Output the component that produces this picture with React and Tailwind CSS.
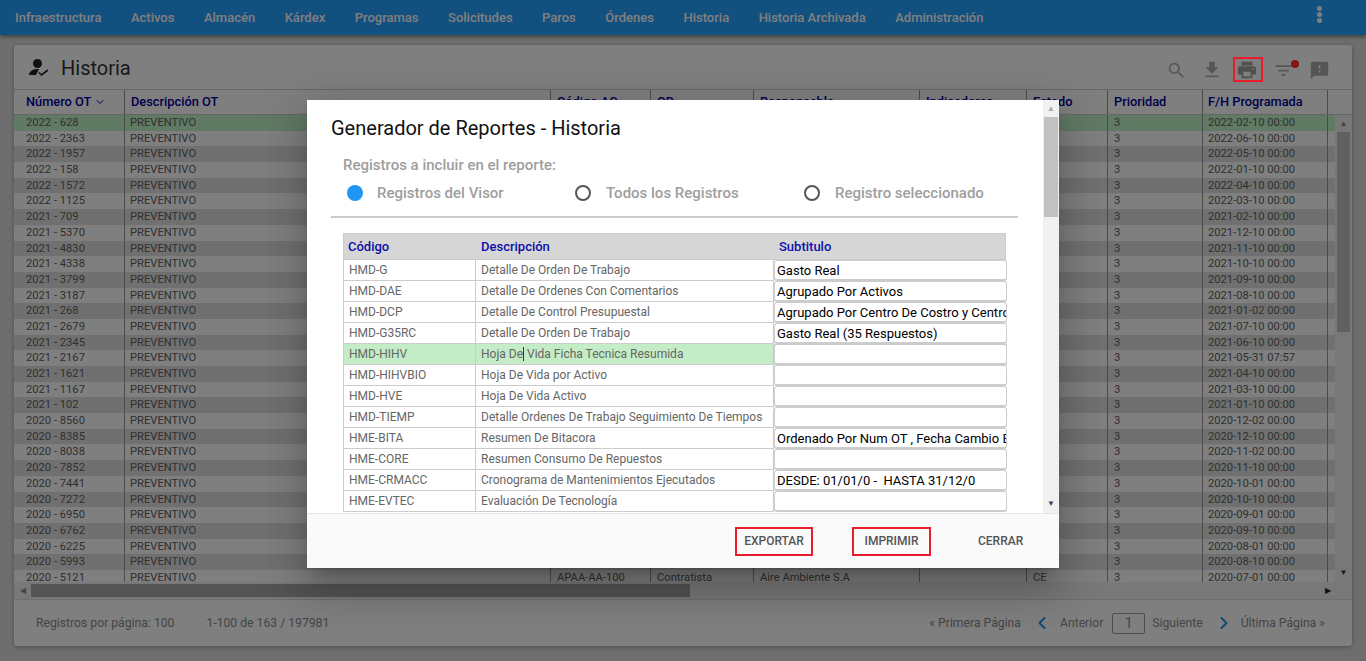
import { ChevronDown, ChevronLeft, ChevronRight } from "lucide-react";

const navItems = ["Infraestructura", "Activos", "Almacén", "Kárdex", "Programas", "Solicitudes", "Paros", "Órdenes", "Historia", "Historia Archivada", "Administración"];

const rows = [
  ["2022 - 628", "2022-02-10 00:00"],
  ["2022 - 2363", "2022-06-10 00:00"],
  ["2022 - 1957", "2022-05-10 00:00"],
  ["2022 - 158", "2022-01-10 00:00"],
  ["2022 - 1572", "2022-04-10 00:00"],
  ["2022 - 1125", "2022-03-10 00:00"],
  ["2021 - 709", "2021-02-10 00:00"],
  ["2021 - 5370", "2021-12-10 00:00"],
  ["2021 - 4830", "2021-11-10 00:00"],
  ["2021 - 4338", "2021-10-10 00:00"],
  ["2021 - 3799", "2021-09-10 00:00"],
  ["2021 - 3187", "2021-08-10 00:00"],
  ["2021 - 268", "2021-01-02 00:00"],
  ["2021 - 2679", "2021-07-10 00:00"],
  ["2021 - 2345", "2021-06-10 00:00"],
  ["2021 - 2167", "2021-05-31 07:57"],
  ["2021 - 1621", "2021-04-10 00:00"],
  ["2021 - 1167", "2021-03-10 00:00"],
  ["2021 - 102", "2021-01-10 00:00"],
  ["2020 - 8560", "2020-12-02 00:00"],
  ["2020 - 8385", "2020-12-10 00:00"],
  ["2020 - 8038", "2020-11-02 00:00"],
  ["2020 - 7852", "2020-11-10 00:00"],
  ["2020 - 7441", "2020-10-01 00:00"],
  ["2020 - 7272", "2020-10-10 00:00"],
  ["2020 - 6950", "2020-09-01 00:00"],
  ["2020 - 6762", "2020-09-10 00:00"],
  ["2020 - 6225", "2020-08-01 00:00"],
  ["2020 - 5993", "2020-08-10 00:00"],
  ["2020 - 5121", "2020-07-01 00:00"],
];

const reportes = [
  ["HMD-G", "Detalle De Orden De Trabajo", "Gasto Real"],
  ["HMD-DAE", "Detalle De Ordenes Con Comentarios", "Agrupado Por Activos"],
  ["HMD-DCP", "Detalle De Control Presupuestal", "Agrupado Por Centro De Costro y Centro De Trabajo"],
  ["HMD-G35RC", "Detalle De Orden De Trabajo", "Gasto Real (35 Respuestos)"],
  ["HMD-HIHV", "Hoja De Vida Ficha Tecnica Resumida", ""],
  ["HMD-HIHVBIO", "Hoja De Vida por Activo", ""],
  ["HMD-HVE", "Hoja De Vida Activo", ""],
  ["HMD-TIEMP", "Detalle Ordenes De Trabajo Seguimiento De Tiempos", ""],
  ["HME-BITA", "Resumen De Bitacora", "Ordenado Por Num OT , Fecha Cambio Estado"],
  ["HME-CORE", "Resumen Consumo De Repuestos", ""],
  ["HME-CRMACC", "Cronograma de Mantenimientos Ejecutados", "DESDE: 01/01/0 -  HASTA 31/12/0"],
  ["HME-EVTEC", "Evaluación De Tecnología", ""],
];

const headers = [
  ["Número OT", "w-[111px] pl-[12px]"],
  ["Descripción OT", "w-[426px] pl-[6px]"],
  ["Código AC", "w-[100px] pl-[6px]"],
  ["OB", "w-[103px] pl-[6px]"],
  ["Responsable", "w-[166px] pl-[6px]"],
  ["Indicadores", "w-[107px] pl-[6px]"],
  ["Estado", "w-[81px] pl-[6px]"],
  ["Prioridad", "w-[95px] pl-[6px]"],
  ["F/H Programada", "w-[125px] pl-[5px]"],
];

function Icon({ d, size, className }) {
  return (
    <svg width={size} height={size} viewBox="0 0 24 24" fill="currentColor" className={className}>
      <path d={d} />
    </svg>
  );
}

function Radio({ label, checked, className }) {
  return (
    <div className={`flex items-center ${className}`}>
      {checked ? (
        <span className="w-4 h-4 rounded-full bg-[#2196f3] mr-[14px]"></span>
      ) : (
        <span className="w-4 h-4 rounded-full border-2 border-[#555] mr-[15px]"></span>
      )}
      <span className="text-[15px] font-medium text-[#9e9e9e]">{label}</span>
    </div>
  );
}

function TablaRow({ row, index }) {
  const cell = "h-[21px] flex items-center border-b border-[#ccc] text-xs text-[#666] whitespace-nowrap";
  const selected = index === 4;
  return (
    <div className={`flex w-fit ${selected ? "bg-[#c3ecc7]" : ""}`}>
      <div className={`${cell} w-[133px] pl-[5px] border-l border-r`}>{row[0]}</div>
      <div className={`${cell} w-[298px] pl-[5px] border-r ${index === 7 ? "tracking-[0.01px]" : ""}`}>
        {selected ? (
          <span>
            Hoja De<span className="border-l border-[#333]">&nbsp;</span>Vida Ficha Tecnica Resumida
          </span>
        ) : (
          row[1]
        )}
      </div>
      <div className="w-[233px] h-[21px] bg-white border border-[#ccc] border-b-2 rounded-[3px] pl-[2px] text-[13px] leading-[20px] text-black whitespace-pre overflow-hidden">
        {row[2]}
      </div>
    </div>
  );
}

export default function App() {
  return (
    <div className="relative h-[661px] w-[1366px] overflow-hidden bg-[#dcdcdc] font-['Roboto',sans-serif]">
      <div className="h-[35px] bg-[#24a0ff] shadow-[0_2px_4px_rgba(0,0,0,0.4)] flex items-center pl-[15px] relative">
        <div className="flex gap-[29.5px] text-white text-[13px] font-medium">
          {navItems.map((item) => (
            <span key={item}>{item}</span>
          ))}
        </div>
        <div className="ml-auto mr-[44px] flex flex-col gap-[1px] mb-[7px]">
          <span className="w-[5px] h-[5px] rounded-full bg-white"></span>
          <span className="w-[5px] h-[5px] rounded-full bg-white"></span>
          <span className="w-[5px] h-[5px] rounded-full bg-white"></span>
        </div>
      </div>

      <div className="mx-[14px] mt-[10px] h-[601px] w-[1338px] bg-white rounded-[3px] shadow-[0_1px_4px_rgba(0,0,0,0.3)] flex flex-col">
        <div className="h-[44px] flex items-center pl-[14px] pr-[22px]">
          <svg width="24" height="24" viewBox="0 0 24 24" fill="#222">
            <circle cx="9.5" cy="8.5" r="4.5" />
            <path d="M1 20c0-3.5 4-6 8-6l2 .2L8 20H1z" />
            <path d="M11 17.5l2.5 2.5L20 15" fill="none" stroke="#222" strokeWidth="1.6" />
          </svg>
          <span className="ml-[9px] mt-[2px] text-xl text-[#333]">Historia</span>
          <div className="ml-auto mt-[6px] flex items-center text-[#b4b4b4]">
            <Icon
              size={21}
              className="mr-[14px]"
              d="M15.5 14h-.79l-.28-.27C15.41 12.59 16 11.11 16 9.5 16 5.91 13.09 3 9.5 3S3 5.91 3 9.5 5.91 16 9.5 16c1.61 0 3.09-.59 4.23-1.57l.27.28v.79l5 4.99L20.49 19l-4.99-5zm-6 0C7.01 14 5 11.99 5 9.5S7.01 5 9.5 5 14 7.01 14 9.5 11.99 14 9.5 14z"
            />
            <Icon size={22} className="mr-[13px] text-[#aaa]" d="M19 9h-4V3H9v6H5l7 7 7-7zM5 18v2h14v-2H5z" />
            <Icon
              size={22}
              className="mr-[15px] text-[#a0a0a0]"
              d="M19 8H5c-1.66 0-3 1.34-3 3v6h4v4h12v-4h4v-6c0-1.66-1.34-3-3-3zm-3 11H8v-5h8v5zm3-7c-.55 0-1-.45-1-1s.45-1 1-1 1 .45 1 1-.45 1-1 1zm-1-9H6v4h12V3z"
            />
            <div className="relative mr-[15px]">
              <Icon size={21} className="text-[#aaa]" d="M10 18h4v-2h-4v2zM3 6v2h18V6H3zm3 7h12v-2H6v2z" />
              <span className="absolute top-0 -right-[5px] w-2 h-2 rounded-full bg-[#ff3030]"></span>
            </div>
            <Icon
              size={21}
              className="text-[#aaa]"
              d="M20 2H4c-1.1 0-1.99.9-1.99 2L2 22l4-4h14c1.1 0 2-.9 2-2V4c0-1.1-.9-2-2-2zm-7 12h-2v-2h2v2zm0-4h-2V6h2v4z"
            />
          </div>
        </div>

        <div className="flex h-[26px] border-y border-[#ccc] text-[12.8px] text-[#000099] font-medium">
          {headers.map(([label, w], i) => (
            <div key={label} className={`${w} flex items-center border-r border-[#999]`}>
              {label}
              {i === 0 && <ChevronDown size={12} className="ml-[3px]" />}
            </div>
          ))}
        </div>

        <div className="flex h-[467px] overflow-hidden">
          <div className="flex-1 overflow-hidden">
            {rows.map((row, i) => (
              <div
                key={row[0]}
                className={`flex h-[15.7px] items-center leading-[15px] text-[11.2px] text-[#606060] ${i === 0 ? "bg-[#c3f5c8]" : i % 2 === 0 ? "bg-[#e0e0e0]" : "bg-white"}`}
              >
                <div className="w-[111px] pl-[12px] h-full border-r border-[#999]">{row[0]}</div>
                <div className="w-[426px] pl-[5px] h-full border-r border-[#999]">PREVENTIVO</div>
                <div className="w-[100px] pl-[6px] h-full border-r border-[#999]">APAA-AA-100</div>
                <div className="w-[103px] pl-[6px] h-full border-r border-[#999]">Contratista</div>
                <div className="w-[166px] pl-[6px] h-full border-r border-[#999]">Aire Ambiente S.A</div>
                <div className="w-[107px] pl-[6px] h-full border-r border-[#999]"></div>
                <div className="w-[81px] pl-[6px] h-full border-r border-[#999]">CE</div>
                <div className="w-[95px] pl-[6px] h-full border-r border-[#999]">3</div>
                <div className="w-[125px] pl-[5px] h-full border-r border-[#999]">{row[1]}</div>
              </div>
            ))}
          </div>
          <div className="w-[17px] bg-[#f1f1f1] flex flex-col items-center">
            <span className="text-[8px] text-[#888] leading-[17px]">▲</span>
            <div className="w-[13px] h-[200px] bg-[#c1c1c1]"></div>
            <span className="mt-auto mb-[1px] text-[8px] text-[#333] leading-[17px]">▼</span>
          </div>
        </div>

        <div className="h-[18px] bg-[#f1f1f1] flex items-center border-b border-[#ddd]">
          <span className="w-[17px] text-[8px] text-center text-[#888]">◀</span>
          <div className="w-[659px] h-[13px] bg-[#a8a8a8]"></div>
          <span className="ml-auto mr-[21px] text-[8px] text-[#222]">▶</span>
        </div>

        <div className="flex-1 flex items-center pl-[22px] pr-[27px] text-[12.2px] text-[#8a8a8a]">
          <span>Registros por página: 100</span>
          <span className="ml-[32px]">1-100 de 163 / 197981</span>
          <div className="ml-auto flex items-center">
            <span>« Primera Página</span>
            <ChevronLeft size={20} className="ml-[11px] mr-[8px] text-[#1e96ea]" strokeWidth={2.5} />
            <span>Anterior</span>
            <span className="ml-[9px] mr-[7px] w-[33px] h-[21px] border border-[#999] rounded-[2px] flex items-center justify-center text-sm">1</span>
            <span>Siguiente</span>
            <ChevronRight size={20} className="ml-[11px] mr-[7px] text-[#1e96ea]" strokeWidth={2.5} />
            <span>Última Página »</span>
          </div>
        </div>
      </div>

      <div className="absolute inset-0 bg-black/50"></div>

      <div className="absolute left-[1233px] top-[57px] w-[30px] h-[25px] border-2 border-[#ea1c2c]"></div>

      <div className="absolute left-[307px] top-[100px] w-[752px] h-[468px] bg-white shadow-[0_11px_15px_-7px_rgba(0,0,0,0.2),0_24px_38px_3px_rgba(0,0,0,0.14),0_9px_46px_8px_rgba(0,0,0,0.12)] flex flex-col">
        <div className="flex h-[413px]">
          <div className="flex-1 overflow-hidden pl-[24px] pt-[15px]">
            <div className="text-xl leading-[26px] text-[#111]">Generador de Reportes - Historia</div>
            <div className="mt-[14px] ml-[12px] text-[15px] leading-[20px] font-medium text-[#9e9e9e]">Registros a incluir en el reporte:</div>
            <div className="flex h-[20px] mt-[8px] ml-[16px]">
              <Radio label="Registros del Visor" checked className="w-[228px]" />
              <Radio label="Todos los Registros" className="w-[229px]" />
              <Radio label="Registro seleccionado" />
            </div>
            <div className="w-[687px] h-[2px] bg-[#ccc] mt-[13px]"></div>
            <div className="ml-[12px] mt-[15px]">
              <div className="flex h-[27px] w-[663px] bg-[#d6d6d6] border border-[#ccc] items-center text-[13px] font-medium text-[#0e0eaa]">
                <span className="w-[133px] pl-[4px]">Código</span>
                <span className="w-[298px] pl-[4px]">Descripción</span>
                <span className="pl-[4px]">Subtitulo</span>
              </div>
              {reportes.map((row, i) => (
                <TablaRow key={row[0]} row={row} index={i} />
              ))}
            </div>
          </div>
          <div className="w-[16px] bg-[#f1f1f1] flex flex-col items-center">
            <span className="text-[8px] text-[#aaa] leading-[17px]">▲</span>
            <div className="w-[14px] h-[100px] bg-[#c1c1c1]"></div>
            <span className="mt-auto mb-[1px] text-[8px] text-[#444] leading-[17px]">▼</span>
          </div>
        </div>
        <div className="flex-1 bg-[#fafafa] border-t border-[#e5e5e5] flex items-center text-xs font-medium text-[#555]">
          <button className="ml-[428px] w-[78px] h-[29px] border-2 border-[#ea1c2c]">EXPORTAR</button>
          <button className="ml-[39px] w-[79px] h-[29px] border-2 border-[#ea1c2c]">IMPRIMIR</button>
          <button className="ml-[47px]">CERRAR</button>
        </div>
      </div>
    </div>
  );
}
